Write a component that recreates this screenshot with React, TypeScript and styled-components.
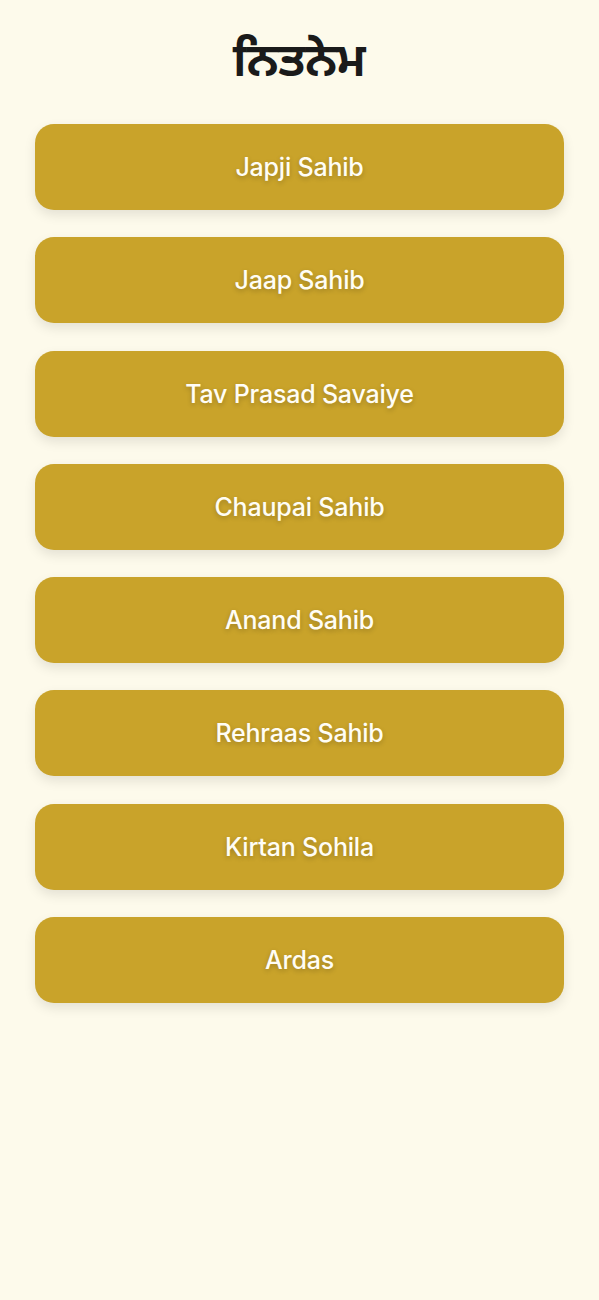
import styled, { createGlobalStyle } from "styled-components";

const GlobalStyle = createGlobalStyle`
  html, body {
    margin: 0;
    padding: 0;
    background: #fdfaeb;
  }
  body {
    font-family: Inter, Roboto, "Noto Sans", "Noto Sans Gurmukhi", sans-serif;
  }
`;

const Page = styled.div`
  min-height: 1300px;
  background: #fdfaeb;
  padding: 22px 35px 40px;
  box-sizing: border-box;
`;

const Title = styled.h1`
  margin: 0 0 28px;
  height: 74px;
  line-height: 74px;
  text-align: center;
  font-size: 46px;
  font-weight: 700;
  color: #1a1a1a;
`;

const List = styled.div`
  display: flex;
  flex-direction: column;
  gap: 27.3px;
`;

const BaniButton = styled.button`
  height: 86px;
  width: 100%;
  border: none;
  border-radius: 19px;
  background: #c9a32a;
  color: #fffdf5;
  font-family: Inter, Roboto, sans-serif;
  font-size: 25px;
  font-weight: 500;
  letter-spacing: -0.2px;
  text-shadow: 0 2px 5px rgba(0, 0, 0, 0.22);
  box-shadow: 0 5px 12px rgba(0, 0, 0, 0.1);
  cursor: pointer;
`;

const banis = [
  "Japji Sahib",
  "Jaap Sahib",
  "Tav Prasad Savaiye",
  "Chaupai Sahib",
  "Anand Sahib",
  "Rehraas Sahib",
  "Kirtan Sohila",
  "Ardas",
];

export default function App() {
  return (
    <>
      <GlobalStyle />
      <Page>
        <Title>ਨਿਤਨੇਮ</Title>
        <List>
          {banis.map((b) => (
            <BaniButton key={b}>{b}</BaniButton>
          ))}
        </List>
      </Page>
    </>
  );
}
